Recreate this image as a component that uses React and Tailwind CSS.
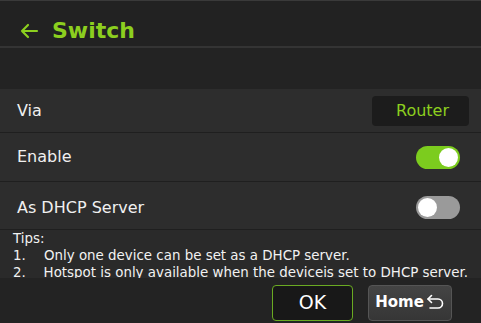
import { useState } from 'react';

export default function App() {
  const [enabled, setEnabled] = useState(true);
  const [dhcp, setDhcp] = useState(false);

  return (
    <main
      className="w-[481px] h-[323px] bg-[#242424] text-white flex flex-col overflow-hidden"
      style={{ fontFamily: '"DejaVu Sans", Verdana, sans-serif' }}
    >
      <header className="h-[46px] bg-[#222222] border-t border-[#3a3a3a] flex items-center pl-[19px] pt-[14px] gap-[13px]">
        <svg width="20" height="16" viewBox="0 0 20 16" fill="none" stroke="#8ccf1f" strokeWidth="2.2" strokeLinecap="round" strokeLinejoin="round">
          <path d="M18 8H3M9 2L3 8l6 6" />
        </svg>
        <h1 className="text-[22px] font-bold text-[#8ccf1f] leading-none">Switch</h1>
      </header>
      <div className="h-[2px] bg-[#343434]" />
      <div className="h-[41px] bg-[#232323]" />

      <div className="bg-[#2d2d2d] flex flex-col">
        <Row label="Via" className="h-[44px]">
          <div className="w-[97px] h-[30px] bg-[#1c1c1c] rounded-[4px] flex items-center justify-center pl-[4px] text-[16px] text-[#8ccf1f]">
            Router
          </div>
        </Row>
        <Row label="Enable" className="h-[49px]">
          <Toggle on={enabled} onClick={() => setEnabled(!enabled)} />
        </Row>
        <Row label="As DHCP Server" className="h-[48px] pt-[4px]">
          <Toggle on={dhcp} onClick={() => setDhcp(!dhcp)} />
        </Row>
      </div>

      <div className="bg-[#2a2a2a] h-[48px] px-[13px] text-[13.4px] leading-[17px] text-[#f2f2f2]">
        <p>Tips:</p>
        <p className="flex"><span className="w-[31px]">1.</span>Only one device can be set as a DHCP server.</p>
        <p className="flex whitespace-nowrap"><span className="w-[31px]">2.</span>Hotspot is only available when the deviceis set to DHCP server.</p>
      </div>

      <footer className="flex-1 bg-[#232323] flex items-center justify-end pr-[29px] gap-[15px] pt-[4px]">
        <button className="w-[81px] h-[36px] rounded-[4px] border border-[#6aaa22] bg-[#181818] text-[19px] text-white">
          OK
        </button>
        <button className="w-[84px] h-[36px] rounded-[4px] border border-[#555555] bg-gradient-to-b from-[#444444] to-[#363636] flex items-center justify-center gap-[1px] text-[15px] font-bold text-white">
          Home
          <svg width="20" height="18" viewBox="0 0 20 18" fill="none" stroke="white" strokeWidth="1.6" strokeLinecap="round" strokeLinejoin="round">
            <path d="M3 5h10a4.5 4.5 0 0 1 0 9H5" />
            <path d="M6.5 1.5L3 5l3.5 3.5" />
          </svg>
        </button>
      </footer>
    </main>
  );
}

function Row({ label, className, children }) {
  return (
    <div className={`${className} flex items-center justify-between pl-[17px] pr-[12px] border-b border-[#1f1f1f]`}>
      <span className="text-[16px] text-[#f0f0f0]">{label}</span>
      {children}
    </div>
  );
}

function Toggle({ on, onClick }) {
  return (
    <button
      onClick={onClick}
      className={`w-[44px] h-[23px] rounded-full mr-[9px] p-[2px] flex items-center ${on ? 'bg-[#7ccc1e] justify-end' : 'bg-[#9a9a9a] justify-start'}`}
    >
      <span className="w-[19px] h-[19px] rounded-full bg-white block" />
    </button>
  );
}
